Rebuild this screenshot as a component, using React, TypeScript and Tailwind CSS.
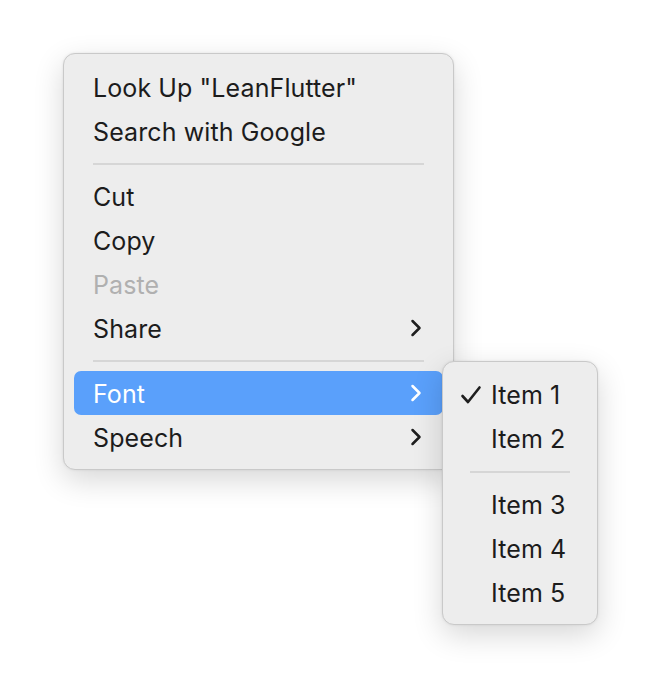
import React from "react";

type Entry = { label?: string; disabled?: boolean; sub?: boolean; active?: boolean; sep?: boolean; checked?: boolean };

const mainItems: Entry[] = [
  { label: 'Look Up "LeanFlutter"' },
  { label: "Search with Google" },
  { sep: true },
  { label: "Cut" },
  { label: "Copy" },
  { label: "Paste", disabled: true },
  { label: "Share", sub: true },
  { sep: true },
  { label: "Font", sub: true, active: true },
  { label: "Speech", sub: true },
];

const subItems: Entry[] = [
  { label: "Item 1", checked: true },
  { label: "Item 2" },
  { sep: true },
  { label: "Item 3" },
  { label: "Item 4" },
  { label: "Item 5" },
];

const Chevron = ({ white }: { white?: boolean }) => (
  <svg width="12" height="18" viewBox="0 0 12 18" fill="none">
    <path
      d="M2.5 2 L9.5 9 L2.5 16"
      stroke={white ? "#ffffff" : "#1f1f1f"}
      strokeWidth="2.5"
      strokeLinecap="round"
      strokeLinejoin="round"
    />
  </svg>
);

const Check = () => (
  <svg width="22" height="20" viewBox="0 0 22 20" fill="none">
    <path d="M2.5 11 L8 17 L19.5 2.5" stroke="#1f1f1f" strokeWidth="2.6" strokeLinecap="round" strokeLinejoin="round" />
  </svg>
);

const menuCls =
  "rounded-[12px] border border-[#c9c9c9] bg-[#ededed] shadow-[0_10px_30px_rgba(0,0,0,0.16),0_0_3px_rgba(0,0,0,0.08)]";

export default function App() {
  return (
    <div className="w-[654px] h-[680px] bg-white font-['Inter',sans-serif] text-[25px] tracking-[0.1px] text-[#1c1c1c]">
      <div className="relative pt-[53px] pl-[63px]">
        {/* main menu */}
        <div className={`w-[391px] pt-[11px] pb-[10px] px-[10px] ${menuCls}`}>
          {mainItems.map((it, i) =>
            it.sep ? (
              <div key={i} className="h-[21px] flex items-center px-[19px]">
                <div className="h-[2px] w-full bg-[#d6d6d6]" />
              </div>
            ) : (
              <div
                key={i}
                className={`h-[44px] flex items-center justify-between pl-[19px] pr-[21px] rounded-[7px] ${
                  it.active ? "bg-[#5aa0fb] text-white" : ""
                } ${it.disabled ? "text-[#b0b0b0]" : ""}`}
              >
                <span className="pt-[3px]">{it.label}</span>
                {it.sub && <Chevron white={it.active} />}
              </div>
            )
          )}
        </div>

        {/* submenu */}
        <div className={`absolute left-[442px] top-[361px] w-[156px] pt-[11px] pb-[9px] ${menuCls}`}>
          {subItems.map((it, i) =>
            it.sep ? (
              <div key={i} className="h-[22px] flex items-center px-[27px]">
                <div className="h-[2px] w-full bg-[#d6d6d6]" />
              </div>
            ) : (
              <div key={i} className="h-[44px] flex items-center pl-[17px]">
                <span className="w-[31px] flex items-center">{it.checked && <Check />}</span>
                <span className="pt-[2px]">{it.label}</span>
              </div>
            )
          )}
        </div>
      </div>
    </div>
  );
}
